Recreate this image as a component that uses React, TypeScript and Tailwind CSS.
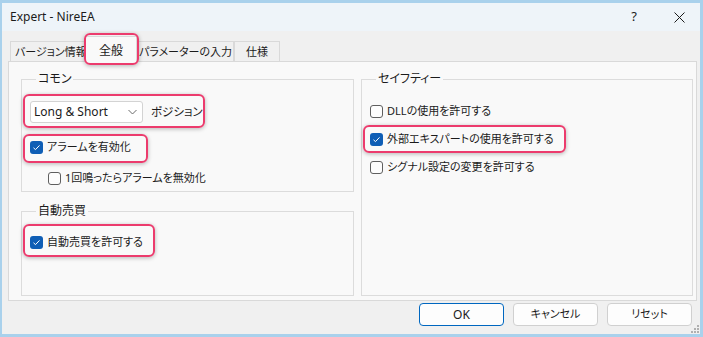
import React from "react";

const font = "font-['Noto_Sans','Noto_Sans_CJK_JP',sans-serif] [font-feature-settings:'palt']";

const Check = ({ checked }: { checked?: boolean }) =>
  checked ? (
    <span className="flex h-[13px] w-[13px] shrink-0 items-center justify-center rounded-[3px] bg-[#0f5eb5]">
      <svg width="9" height="9" viewBox="0 0 9 9" fill="none">
        <path d="M1.5 4.8 L3.5 6.6 L7.5 2.4" stroke="white" strokeWidth="1" />
      </svg>
    </span>
  ) : (
    <span className="h-[13px] w-[13px] shrink-0 rounded-[3px] border border-[#5f5f5f] bg-[#fdfdfd]" />
  );

const Pink = ({ className }: { className: string }) => (
  <span
    className={`pointer-events-none absolute rounded-[6px] border-2 border-[#ec3b6d] shadow-[0_1px_4px_rgba(0,0,0,0.28)] ${className}`}
  />
);

const Row = ({
  label,
  checked,
  className = "",
  children,
}: {
  label: string;
  checked?: boolean;
  className?: string;
  children?: React.ReactNode;
}) => (
  <div className={`relative flex h-[20px] items-center gap-[4px] ${className}`}>
    {children}
    <Check checked={checked} />
    <span className="whitespace-nowrap">{label}</span>
  </div>
);

const Group = ({
  title,
  className = "",
  children,
}: {
  title: string;
  className?: string;
  children: React.ReactNode;
}) => (
  <fieldset className={`border border-[#dcdcdc] px-[8px] ${className}`}>
    <legend className="ml-[6px] px-[2px] text-[12px] leading-[16px]">{title}</legend>
    {children}
  </fieldset>
);

export default function App() {
  const tabs = [
    { label: "バージョン情報", w: "w-[77px]", cls: "pl-[4px] overflow-hidden" },
    { label: "全般", active: true },
    { label: "パラメーターの入力", w: "w-[99px]", cls: "justify-center pl-[2px]" },
    { label: "仕様", w: "w-[46px]", cls: "justify-center" },
  ];

  return (
    <div className={`h-[337px] w-[703px] overflow-hidden bg-[#a9d1ec] pl-[2px] pt-[3px] text-[11px] text-[#1b1b1b] ${font}`}>
      <div className="relative flex h-[331px] w-[698px] flex-col bg-[#f0f0f0]">
        {/* title bar */}
        <div className="flex h-[28px] items-center bg-[#eef4f9]">
          <span className="ml-[8px] flex-1 text-[12px]">Expert - NireEA</span>
          <span className="flex w-[48px] justify-center text-[13px]">?</span>
          <span className="flex w-[42px] justify-center">
            <svg width="11" height="11" viewBox="0 0 11 11">
              <path d="M0.5 0.5 L10.5 10.5 M10.5 0.5 L0.5 10.5" stroke="#1b1b1b" strokeWidth="1" />
            </svg>
          </span>
        </div>

        {/* tabs */}
        <div className="ml-[6px] mr-[3px] flex flex-1 flex-col">
          <div className="relative flex h-[30px] items-end pl-[2px]">
            {tabs.map((t) =>
              t.active ? (
                <div
                  key={t.label}
                  className="relative z-10 -mx-[2px] -mb-px flex h-[26px] w-[52px] items-start justify-center border border-b-0 border-[#d9d9d9] bg-[#f9f9f9] pt-[5px] text-[12px]"
                >
                  {t.label}
                  <Pink className="-left-[2px] -top-[4px] h-[32px] w-[55px]" />
                </div>
              ) : (
                <div
                  key={t.label}
                  className={`flex h-[20px] items-center whitespace-nowrap border border-b-0 border-[#d9d9d9] bg-[#f0f0f0] pt-[1px] ${t.w} ${t.cls}`}
                >
                  {t.label}
                </div>
              )
            )}
          </div>

          {/* panel */}
          <div className="flex h-[240px] gap-[7px] border border-[#d9d9d9] bg-[#f9f9f9] pb-[4px] pl-[12px] pr-[3px] pt-[9px]">
            <div className="flex w-[333px] flex-col gap-[11px]">
              <Group title="コモン" className="h-[121px]">
                <div className="relative mt-[14px] flex h-[22px] items-center">
                  <div className="flex h-[22px] w-[113px] items-center justify-between rounded-[3px] border border-[#d3d3d3] bg-white pl-[3px] pr-[5px] text-[12px]">
                    <span>Long &amp; Short</span>
                    <svg width="9" height="6" viewBox="0 0 9 6" fill="none">
                      <path d="M0.5 1 L4.5 5 L8.5 1" stroke="#6b6b6b" strokeWidth="1" />
                    </svg>
                  </div>
                  <span className="ml-[8px] text-[11.5px]">ポジション</span>
                  <Pink className="-left-[7px] -top-[7px] h-[34px] w-[182px]" />
                </div>
                <Row label="アラームを有効化" checked className="mt-[14px]">
                  <Pink className="-left-[7px] -top-[3px] h-[29px] w-[125px]" />
                </Row>
                <Row label="1回鳴ったらアラームを無効化" className="ml-[18px] mt-[11px]" />
              </Group>
              <Group title="自動売買" className="flex-1">
                <Row label="自動売買を許可する" checked className="mt-[13px]">
                  <Pink className="-left-[7px] -top-[8px] h-[33px] w-[132px]" />
                </Row>
              </Group>
            </div>
            <Group title="セイフティー" className="flex-1">
              <div className="flex flex-col gap-[8px] pt-[14px]">
                <Row label="DLLの使用を許可する" />
                <Row label="外部エキスパートの使用を許可する" checked>
                  <Pink className="-left-[7px] -top-[4px] h-[28px] w-[203px]" />
                </Row>
                <Row label="シグナル設定の変更を許可する" />
              </div>
            </Group>
          </div>

          {/* buttons */}
          <div className="mt-[2px] flex justify-end gap-[9px] pr-[5px]">
            <button className="flex h-[23px] w-[85px] items-center justify-center rounded-[4px] border border-[#0067c0] bg-[#fdfdfd] text-[12px]">
              OK
            </button>
            <button className="flex h-[23px] w-[85px] items-center justify-center rounded-[4px] border border-[#d0d0d0] bg-[#fdfdfd]">
              キャンセル
            </button>
            <button className="flex h-[23px] w-[85px] items-center justify-center rounded-[4px] border border-[#d0d0d0] bg-[#fdfdfd]">
              リセット
            </button>
          </div>
        </div>

        {/* resize grip */}
        <svg className="absolute bottom-[1px] right-[1px]" width="8" height="8" viewBox="0 0 8 8">
          <rect x="6" y="0" width="2" height="2" fill="#b0b0b0" />
          <rect x="3" y="3" width="2" height="2" fill="#b0b0b0" />
          <rect x="6" y="3" width="2" height="2" fill="#b0b0b0" />
          <rect x="0" y="6" width="2" height="2" fill="#b0b0b0" />
          <rect x="3" y="6" width="2" height="2" fill="#b0b0b0" />
          <rect x="6" y="6" width="2" height="2" fill="#b0b0b0" />
        </svg>
      </div>
    </div>
  );
}
